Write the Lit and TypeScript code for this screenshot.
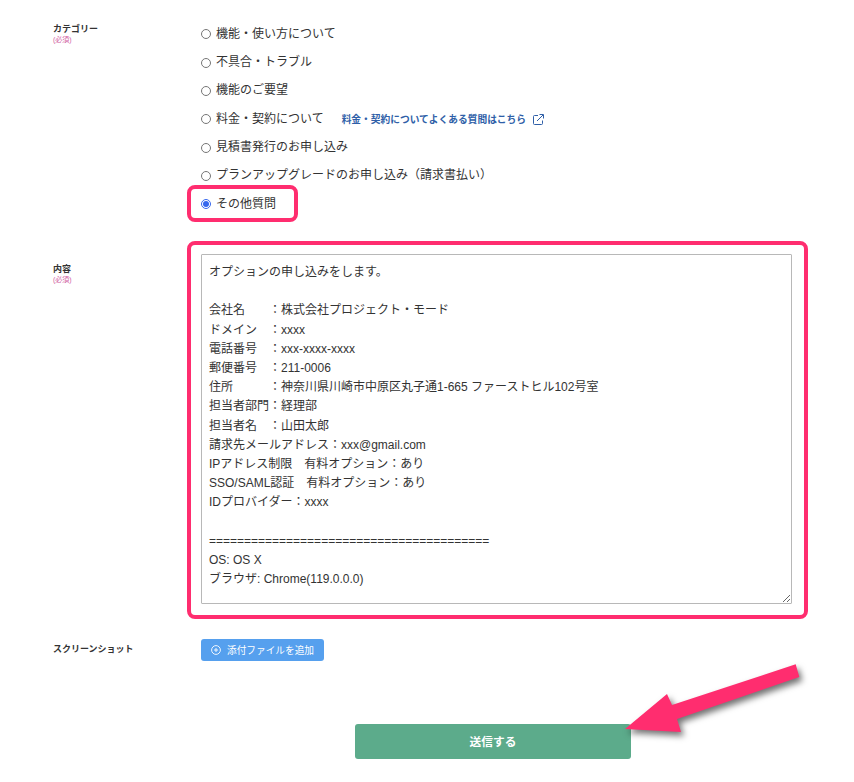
import { LitElement, html, css, svg } from "lit";
import { customElement } from "lit/decorators.js";

const CONTENT = `オプションの申し込みをします。

会社名　　：株式会社プロジェクト・モード
ドメイン　：xxxx
電話番号　：xxx-xxxx-xxxx
郵便番号　：211-0006
住所　　　：神奈川県川崎市中原区丸子通1-665 ファーストヒル102号室
担当者部門：経理部
担当者名　：山田太郎
請求先メールアドレス：xxx@gmail.com
IPアドレス制限　有料オプション：あり
SSO/SAML認証　有料オプション：あり
IDプロバイダー：xxxx

========================================
OS: OS X
ブラウザ: Chrome(119.0.0.0)`;

const OPTIONS = [
  "機能・使い方について",
  "不具合・トラブル",
  "機能のご要望",
  "料金・契約について",
  "見積書発行のお申し込み",
  "プランアップグレードのお申し込み（請求書払い）",
  "その他質問",
];

@customElement("app-root")
export class AppRoot extends LitElement {
  static styles = css`
    :host {
      display: block;
      position: relative;
      width: 854px;
      height: 782px;
      overflow: hidden;
      background: #fff;
      color: #333;
      font-family: "Liberation Sans", "Noto Sans CJK JP", sans-serif;
    }
    .form {
      display: grid;
      grid-template-columns: 148px 591px;
      padding: 19px 0 0 53px;
    }
    .label {
      font-size: 9px;
      font-weight: 700;
      line-height: 12px;
    }
    .req {
      display: block;
      font-size: 7px;
      font-weight: 400;
      line-height: 9px;
      color: #d0609f;
    }
    .cat-label { padding-top: 4px; }
    .radios {
      display: flex;
      flex-direction: column;
      height: 235px;
    }
    .radio {
      display: flex;
      align-items: center;
      height: 28.35px;
      font-size: 12px;
      color: #333;
    }
    .radio > span {
      margin-bottom: 2px;
    }
    .radio input {
      width: 10px;
      height: 10px;
      margin: 2px 5px 0 0;
      flex: none;
      accent-color: #3567ee;
    }
    .link {
      display: inline-flex;
      align-items: center;
      gap: 7px;
      margin: 2px 0 0 18px;
      font-size: 9.72px;
      font-weight: 700;
      color: #2f5fa8;
      text-decoration: none;
    }
    .link svg { display: block; }
    .body-label { padding-top: 9px; }
    textarea {
      display: block;
      box-sizing: border-box;
      width: 591px;
      height: 350px;
      margin: 0;
      padding: 8px 7px;
      border: 1px solid #b8b8b8;
      border-radius: 1px;
      outline: none;
      background: #fff;
      color: #333;
      font-family: "Liberation Sans", "Noto Sans CJK JP", sans-serif;
      font-size: 12px;
      line-height: 19.2px;
    }
    .shot-label {
      padding-top: 39px;
    }
    .shot-cell { padding-top: 35px; }
    .attach {
      display: flex;
      align-items: center;
      justify-content: center;
      gap: 6px;
      box-sizing: border-box;
      width: 123px;
      height: 22px;
      padding: 0;
      border: 0;
      border-radius: 3px;
      background: #56a0ee;
      color: #fff;
      font-family: inherit;
      font-size: 9.68px;
      font-weight: 400;
    }
    .submit-row {
      display: flex;
      padding: 63px 0 0 355px;
    }
    .submit {
      width: 276px;
      height: 35px;
      padding: 0 0 2px;
      border: 0;
      border-radius: 3px;
      background: #5cab8b;
      color: #fff;
      font-family: inherit;
      font-size: 11.7px;
      font-weight: 700;
    }
    .mark {
      position: absolute;
      box-sizing: border-box;
      border: 4px solid #ff2d6f;
      border-radius: 8px;
      pointer-events: none;
    }
    .mark-radio { left: 187px; top: 185px; width: 111px; height: 37px; }
    .mark-body { left: 187px; top: 241px; width: 621px; height: 378px; }
    .arrow {
      position: absolute;
      left: 610px;
      top: 650px;
      overflow: visible;
      filter: drop-shadow(3px 4px 3px rgba(0, 0, 0, 0.55));
      pointer-events: none;
    }
  `;

  render() {
    return html`
      <div class="form">
        <div class="label cat-label">カテゴリー<span class="req">(必須)</span></div>
        <div class="radios">
          ${OPTIONS.map(
            (o, i) => html`
              <label class="radio">
                <input type="radio" name="cat" ?checked=${i === 6} />
                <span>${o}</span>
                ${i === 3
                  ? html`<a class="link">
                      料金・契約についてよくある質問はこちら
                      <svg width="11" height="11" viewBox="0 0 11 11" fill="none" stroke="#2f5fa8" stroke-width="1">
                        <path d="M5 1.5H1.5a1 1 0 0 0-1 1V9.500a1 1 0 0 0 1 1h7a1 1 0 0 0 1-1V6.500" />
                        <path d="M4 7L10 1M6.500 .5H10.500V4.500" />
                      </svg>
                    </a>`
                  : ""}
              </label>
            `
          )}
        </div>
        <div class="label body-label">内容<span class="req">(必須)</span></div>
        <textarea .value=${CONTENT}></textarea>
        <div class="label shot-label">スクリーンショット</div>
        <div class="shot-cell">
          <button class="attach">
            <svg width="10" height="10" viewBox="0 0 10 10" fill="none" stroke="#fff" stroke-width="0.9">
              <circle cx="5" cy="5" r="4.4" />
              <path d="M5 3V7M3 5H7" />
            </svg>
            添付ファイルを追加
          </button>
        </div>
      </div>
      <div class="submit-row"><button class="submit">送信する</button></div>
      <div class="mark mark-radio"></div>
      <div class="mark mark-body"></div>
      <svg class="arrow" width="200" height="100" viewBox="610 650 200 100">
        ${svg`<path fill="#ff2d6f" d="M795.700 664.300L799.300 677L677 719L681 732L625 729L667 694L672 705Z" />`}
      </svg>
    `;
  }
}
